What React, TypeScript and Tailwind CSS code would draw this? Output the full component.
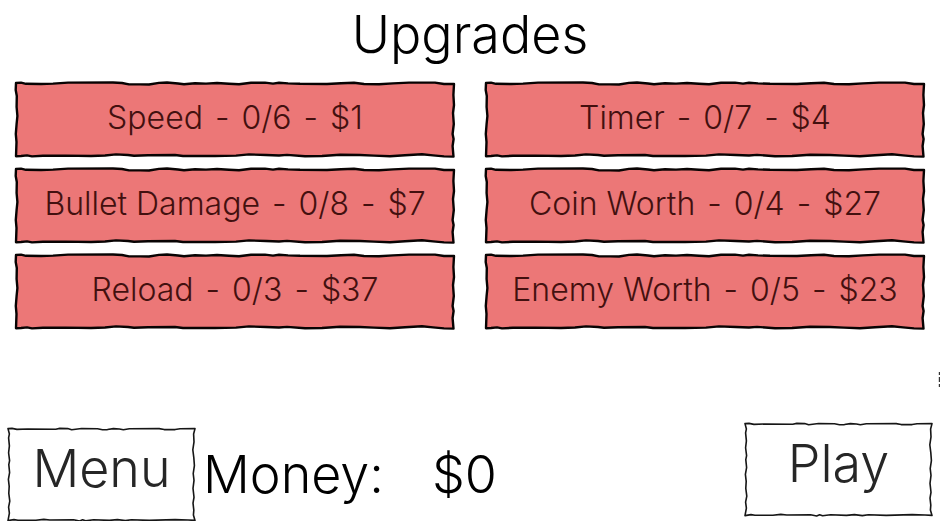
import React from 'react';

interface Upgrade {
  name: string;
  level: number;
  max: number;
  cost: number;
}

const upgrades: Upgrade[] = [
  { name: 'Speed', level: 0, max: 6, cost: 1 },
  { name: 'Timer', level: 0, max: 7, cost: 4 },
  { name: 'Bullet Damage', level: 0, max: 8, cost: 7 },
  { name: 'Coin Worth', level: 0, max: 4, cost: 27 },
  { name: 'Reload', level: 0, max: 3, cost: 37 },
  { name: 'Enemy Worth', level: 0, max: 5, cost: 23 },
];

// Wobbly hand-drawn outline behind an upgrade button
const UpgradeFrame: React.FC = () => (
  <svg
    className="absolute inset-0 size-full overflow-visible"
    viewBox="0 0 440 75"
    preserveAspectRatio="none"
    aria-hidden="true"
  >
    <path
      d="M1 1 L6 .6 L11 1.8 L26 2 L38 1.6 L53 .6 L98 .5 L107 1 L114 2.4 L125 2.4 L134 2.5 L144 .9 L152 .5 L163 1.5 L169 2.2 L180 1.2 L191 1.6 L202 1 L214 1.7 L224 2.3 L236 .8 L250 .6 L258 1.6 L264 .7 L273 1.4 L285 1.8 L312 2 L326 1.2 L339 .8 L349 2 L364 2.2 L378 1.4 L394 .6 L420 .6 L429 2 L439 2 L438.4 13 L439 23 L438 31 L438.8 42 L437.6 52 L438.6 57 L437.6 64 L438.5 74.6 L429 74.4 L418 73.4 L407 72.2 L390 73.2 L375 74.2 L359 73.6 L345 73 L325 72.8 L307 74 L290 74.2 L272 72.9 L264 73.5 L251 73 L234 72.4 L221 73.6 L200 74 L168 74 L160 73 L133 73.2 L119 73.7 L113 73 L101 72.4 L90 73.5 L76 74 L50 73.6 L28 73.8 L17 74.4 L12 73.4 L6 74 L1 74.2 L1.5 60 L.8 52 L1.6 42 L2.4 34 L1.6 25 L1.8 14 L.7 8 Z"
      fill="#ec7777"
      stroke="#080303"
      strokeWidth="2.4"
      strokeLinejoin="round"
      vectorEffect="non-scaling-stroke"
    />
  </svg>
);

const BoxFrame: React.FC = () => (
  <svg
    className="absolute inset-0 size-full overflow-visible"
    viewBox="0 0 188 94"
    preserveAspectRatio="none"
    aria-hidden="true"
  >
    <path
      d="M0 .6 L4 .4 L9 1.4 L20 1 L48 1.2 L52 .4 L60 .6 L64 1.8 L68 1.2 L74 .5 L90 .8 L95 1.8 L100 1.6 L106 .6 L112 1 L116 1.8 L122 .8 L152 .6 L157 1.6 L168 1.6 L173 .8 L188 .6 L186.6 6 L187 14 L185.8 22 L186.8 30 L187.4 38 L186.2 46 L187 53 L186 61 L187 70 L186 76 L186.8 83 L186.4 88 L188 93.4 L181 93 L168 92.6 L142 93.4 L124 92.8 L118 93.6 L110 92.6 L102 93.4 L86 92.8 L78 93.8 L75 92.8 L72 94 L66 92.8 L42 93 L36 92.4 L28 93.2 L10 93.2 L6 92.6 L0 93.6 L1.4 86 L.6 80 L1.8 74 L.8 66 L1.2 59 L.4 52 L1.6 45 L.8 37 L1.6 33 L.6 25 L1.4 18 L.6 10 L1.4 6 Z"
      fill="none"
      stroke="#161616"
      strokeWidth="1.6"
      strokeLinejoin="round"
      vectorEffect="non-scaling-stroke"
    />
  </svg>
);

const UpgradeButton: React.FC<{ upgrade: Upgrade }> = ({ upgrade }) => {
  return (
    <button type="button" className="relative h-[75px] cursor-pointer pb-1 text-[32px] leading-9 text-[#43100f]">
      <UpgradeFrame />
      <span className="relative flex items-center justify-center gap-3 whitespace-nowrap">
        <span>{upgrade.name}</span>
        <span>-</span>
        <span>{upgrade.level}/{upgrade.max}</span>
        <span>-</span>
        <span>${upgrade.cost}</span>
      </span>
    </button>
  );
};

const MenuButton: React.FC<{ label: string }> = ({ label }) => (
  <button
    type="button"
    className="relative h-[93px] w-[187px] cursor-pointer pb-3 text-[52px] leading-[64px] text-[#262626]"
  >
    <BoxFrame />
    <span className="relative">{label}</span>
  </button>
);

export default function App() {
  return (
    <main className="bg-white pt-1 font-['Inter',sans-serif] font-light text-black">
      <h1 className="text-center text-[52px] leading-[62px]">Upgrades</h1>

      <section className="mt-4 grid grid-cols-2 gap-x-[30px] gap-y-[11px] px-[15px]">
        {upgrades.map((upgrade) => (
          <UpgradeButton key={upgrade.name} upgrade={upgrade} />
        ))}
      </section>

      <div className="mt-[43px] flex justify-end">
        <svg width="2" height="16" viewBox="0 0 2 16" aria-hidden="true">
          <path d="M1.4 0v3M1.4 5v5M1.4 12v3" stroke="#333" strokeWidth="1.2" />
        </svg>
      </div>

      <footer className="mt-[35px] flex items-start justify-between px-2">
        <div className="flex items-center gap-2 pt-[5px]">
          <MenuButton label="Menu" />
          <p className="flex gap-12 text-[52px] leading-[64px]">
            <span>Money:</span>
            <span>$0</span>
          </p>
        </div>
        <MenuButton label="Play" />
      </footer>
    </main>
  );
}
